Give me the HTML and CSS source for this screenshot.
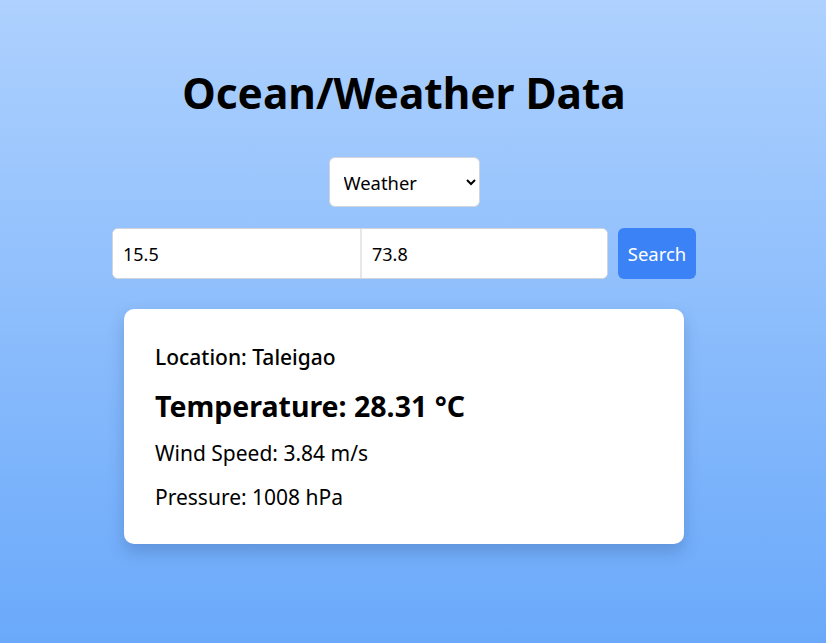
FILE: index.html
```html
<!DOCTYPE html>
<html>
<head>
<meta charset="utf-8">
<link rel="stylesheet" href="styles.css">
</head>
<body>
<main class="page">
  <h1 class="title">Ocean/Weather Data</h1>
  <select class="mode">
    <option>Weather</option>
    <option>Ocean</option>
  </select>
  <div class="search-row">
    <div class="coords">
      <input class="coord" type="text" value="15.5">
      <input class="coord" type="text" value="73.8">
    </div>
    <button class="search-btn">Search</button>
  </div>
  <section class="card">
    <p class="location">Location: Taleigao</p>
    <p class="temp">Temperature: 28.31 °C</p>
    <p class="stat">Wind Speed: 3.84 m/s</p>
    <p class="stat">Pressure: 1008 hPa</p>
  </section>
</main>
</body>
</html>
```

FILE: styles.css
```css
html, body {
  margin: 0;
  padding: 0;
  height: 100%;
}
body {
  font-family: "Noto Sans", "Open Sans", sans-serif;
  background: linear-gradient(to bottom, #aed1fe 0%, #6aa9fa 100%);
  color: #000;
}
.page {
  min-height: 643px;
  box-sizing: border-box;
  display: flex;
  flex-direction: column;
  align-items: center;
  padding-top: 60px;
  padding-right: 18px;
}
.title {
  margin: 0;
  font-size: 42.4px;
  font-weight: 700;
  line-height: 66px;
}
.mode {
  margin-top: 31px;
  width: 151px;
  height: 50px;
  font: inherit;
  font-size: 18.4px;
  padding: 0 8px 0 10px;
  border: 1px solid #d1d5db;
  border-radius: 6px;
  background: #fff;
  color: #000;
}
.search-row {
  margin-top: 21px;
  display: flex;
  gap: 10px;
}
.coords {
  display: flex;
  border: 1px solid #d1d5db;
  border-radius: 6px;
  overflow: hidden;
  background: #fff;
}
.coord {
  width: 247px;
  height: 49px;
  box-sizing: border-box;
  border: 0;
  padding: 0 10px;
  font: inherit;
  font-size: 18px;
  color: #000;
  background: #fff;
}
.coord + .coord {
  border-left: 2px solid #e5e7eb;
}
.search-btn {
  width: 78px;
  height: 51px;
  border: 0;
  border-radius: 6px;
  background: #3b82f6;
  color: #fff;
  font: inherit;
  font-size: 18.5px;
  padding: 0;
}
.card {
  margin-top: 30px;
  width: 560px;
  box-sizing: border-box;
  background: #fff;
  border-radius: 10px;
  box-shadow: 0 8px 16px rgba(30, 64, 120, 0.25);
  padding: 33px 31px 32px;
}
.card p {
  margin: 0;
}
.location {
  font-size: 21px;
  font-weight: 500;
  line-height: 30px;
}
.temp {
  margin-top: 16px !important;
  font-size: 28.5px;
  font-weight: 700;
  line-height: 36px;
}
.stat {
  margin-top: 14px !important;
  font-size: 21px;
  line-height: 30px;
}
```
